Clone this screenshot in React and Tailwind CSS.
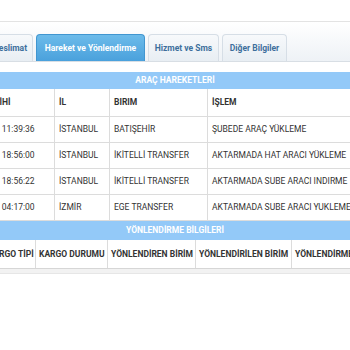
export default function App() {
  const rows = [
    ["15.03.2020 11:39:36", "İSTANBUL", "BATIŞEHİR", "ŞUBEDE ARAÇ YÜKLEME"],
    ["15.03.2020 18:56:00", "İSTANBUL", "İKİTELLİ TRANSFER", "AKTARMADA HAT ARACI YÜKLEME"],
    ["15.03.2020 18:56:22", "İSTANBUL", "İKİTELLİ TRANSFER", "AKTARMADA SUBE ARACI INDIRME"],
    ["16.03.2020 04:17:00", "İZMİR", "EGE TRANSFER", "AKTARMADA SUBE ARACI YUKLEME"],
  ];
  const w1 = ["w-[102px]", "w-[55px]", "w-[98px]", "w-[170px]"];
  const h2 = ["KARGO TİPİ", "KARGO DURUMU", "YÖNLENDİREN BİRİM", "YÖNLENDİRİLEN BİRİM", "YÖNLENDİRME TARİHİ"];
  const w2 = ["w-[51px]", "w-[72px]", "w-[88px]", "w-[96px]", "w-[100px]"];
  return (
    <div className="w-[350px] h-[350px] overflow-hidden bg-white text-[#333] font-['Roboto',sans-serif]">
      <div className="h-[22px] border-b border-[#e3e3e3]"></div>
      <div className="h-[40px] flex items-end border-b border-[#d8dee4] bg-gradient-to-b from-[#ffffff] to-[#eef2f6]">
        <div className="flex items-end gap-[3px] ml-[-12px]">
          <div className="h-[27px] w-[45px] rounded-t-[4px] border border-b-0 border-[#d6dee6] bg-gradient-to-b from-[#f7f9fb] to-[#e8eef3] flex items-center justify-center text-[8.5px] font-bold text-[#3d6f9c]">Teslimat</div>
          <div className="h-[27px] w-[109px] rounded-t-[4px] border border-b-0 border-[#4196d0] bg-gradient-to-b from-[#6cbbea] to-[#4aa1dc] flex items-center justify-center text-[8.5px] font-bold text-white">Hareket ve Yönlendirme</div>
          <div className="h-[27px] w-[71px] rounded-t-[4px] border border-b-0 border-[#d6dee6] bg-gradient-to-b from-[#f7f9fb] to-[#e8eef3] flex items-center justify-center text-[8.5px] font-bold text-[#3d6f9c]">Hizmet ve Sms</div>
          <div className="h-[27px] w-[65px] rounded-t-[4px] border border-b-0 border-[#d6dee6] bg-gradient-to-b from-[#f7f9fb] to-[#e8eef3] flex items-center justify-center text-[8.5px] font-bold text-[#3d6f9c]">Diğer Bilgiler</div>
        </div>
      </div>
      <div className="h-[10px]"></div>
      <div className="h-[17px] bg-[#93c9f8] flex items-center justify-center text-[8.5px] font-bold text-white">ARAÇ HAREKETLERİ</div>
      <div className="ml-[-47px] w-max">
        <div className="flex h-[28px] border-b border-[#dcdcdc] text-[8.5px] font-bold">
          {["İŞLEM TARİHİ", "İL", "BIRIM", "İŞLEM"].map((t, i) => (
            <div key={i} className={`${w1[i]} shrink-0 flex items-center px-[4px] border-r border-[#dcdcdc] whitespace-nowrap`}>{t}</div>
          ))}
        </div>
        {rows.map((r, j) => (
          <div key={j} className="flex h-[26px] border-b border-[#dcdcdc] text-[8.5px]">
            {r.map((t, i) => (
              <div key={i} className={`${w1[i]} shrink-0 flex items-center px-[4px] border-r border-[#dcdcdc] whitespace-nowrap`}>{t}</div>
            ))}
          </div>
        ))}
      </div>
      <div className="h-[19px] bg-[#93c9f8] flex items-center justify-center text-[8.5px] font-bold text-white">YÖNLENDİRME BİLGİLERİ</div>
      <div className="ml-[-15px] w-max">
        <div className="flex h-[29px] border-b border-[#d6d6d6] text-[8.5px] font-bold">
          {h2.map((t, i) => (
            <div key={i} className={`${w2[i]} shrink-0 flex items-center px-[3px] border-r border-[#dcdcdc] whitespace-nowrap`}>{t}</div>
          ))}
        </div>
      </div>
      <div className="h-[5px] bg-[#f2f2f2] border-b border-[#e6e6e6]"></div>
    </div>
  );
}
